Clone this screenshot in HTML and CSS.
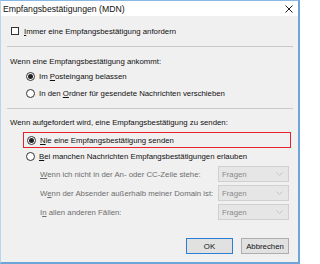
FILE: index.html
```html
<!DOCTYPE html>
<html lang="de">
<head>
<meta charset="utf-8">
<link rel="stylesheet" href="styles.css">
</head>
<body>
<div class="window">
  <div class="titlebar">
    <span class="title">Empfangsbestätigungen (MDN)</span>
    <svg class="close" width="8" height="8" viewBox="0 0 8 8"><path d="M0.5 0.5L7.5 7.5M7.5 0.5L0.5 7.5" stroke="#222" stroke-width="1" fill="none"/></svg>
  </div>
  <div class="content">
    <div class="row check-row">
      <span class="checkbox"></span>
      <span class="label"><u>I</u>mmer eine Empfangsbestätigung anfordern</span>
    </div>
    <div class="sep sep1"></div>
    <div class="row heading h1">Wenn eine Empfangsbestätigung ankommt:</div>
    <div class="row radio-row r1"><span class="radio on"></span><span class="label">Im <u>P</u>osteingang belassen</span></div>
    <div class="row radio-row r2"><span class="radio"></span><span class="label">In den <u>O</u>rdner für gesendete Nachrichten verschieben</span></div>
    <div class="sep sep2"></div>
    <div class="row heading h2">Wenn aufgefordert wird, eine Empfangsbestätigung zu senden:</div>
    <div class="focusbox">
      <span class="radio on"></span><span class="label"><u>N</u>ie eine Empfangsbestätigung senden</span>
    </div>
    <div class="row radio-row r4"><span class="radio"></span><span class="label"><u>B</u>ei manchen Nachrichten Empfangsbestätigungen erlauben</span></div>
    <div class="options">
      <span class="opt-label"><u>W</u>enn ich nicht in der An- oder CC-Zeile stehe:</span>
      <span class="select">Fragen<svg class="chev" width="7" height="4" viewBox="0 0 7 4"><path d="M0.5 0.5L3.5 3.5L6.5 0.5" stroke="#c4c4c4" fill="none"/></svg></span>
      <span class="opt-label">W<u>e</u>nn der Absender außerhalb meiner Domain ist:</span>
      <span class="select">Fragen<svg class="chev" width="7" height="4" viewBox="0 0 7 4"><path d="M0.5 0.5L3.5 3.5L6.5 0.5" stroke="#c4c4c4" fill="none"/></svg></span>
      <span class="opt-label">I<u>n</u> allen anderen Fällen:</span>
      <span class="select">Fragen<svg class="chev" width="7" height="4" viewBox="0 0 7 4"><path d="M0.5 0.5L3.5 3.5L6.5 0.5" stroke="#c4c4c4" fill="none"/></svg></span>
    </div>
    <div class="buttons">
      <span class="btn default">OK</span>
      <span class="btn">Abbrechen</span>
    </div>
  </div>
</div>
</body>
</html>
```

FILE: styles.css
```css
* { box-sizing: border-box; }
html, body { margin: 0; padding: 0; }
body {
  width: 300px;
  height: 264px;
  overflow: hidden;
  font-family: "Liberation Sans", "DejaVu Sans", sans-serif;
  font-size: 7.8px;
  color: #111;
}
.window {
  width: 300px;
  height: 264px;
  background: #f0f0f0;
  border-top: 1px solid #8ab8e2;
  border-left: 1px solid #b9d5ee;
  border-right: 2px solid #6ea5d8;
  border-bottom: 2px solid #6ea5d8;
  display: flex;
  flex-direction: column;
}
.titlebar {
  height: 15px;
  background: #ffffff;
  display: flex;
  align-items: center;
  justify-content: space-between;
  padding: 0 4px 0 2px;
  flex: none;
}
.title { font-size: 8.7px; color: #111; }
.close { margin-right: 1px; }
.content {
  display: flex;
  flex-direction: column;
}
.row {
  height: 14px;
  display: flex;
  align-items: center;
  white-space: nowrap;
}
.check-row { margin-top: 8px; padding-left: 10px; }
.checkbox {
  width: 8px; height: 8px;
  border: 1px solid #333;
  background: #fff;
  margin-right: 5px;
  flex: none;
}
.sep {
  height: 1px;
  background: #c9c9c9;
  margin-left: 6px;
  margin-right: 5px;
}
.sep1 { margin-top: 8px; }
.sep2 { margin-top: 8px; }
.heading { padding-left: 9px; }
.h1 { margin-top: 7px; }
.h2 { margin-top: 6px; }
.radio-row { padding-left: 25px; }
.r1 { margin-top: 1px; }
.r2 { margin-top: 3px; }
.r4 { margin-top: 1px; }
.radio {
  width: 9px; height: 9px;
  border: 1px solid #333;
  border-radius: 50%;
  background: #fff;
  margin-right: 4px;
  flex: none;
  display: flex;
  align-items: center;
  justify-content: center;
}
.radio.on::after {
  content: "";
  width: 5px; height: 5px;
  border-radius: 50%;
  background: #222;
}
.focusbox {
  margin-top: 3px;
  margin-left: 22px;
  width: 268px;
  height: 16px;
  border: 1.5px solid #e8202a;
  display: flex;
  align-items: center;
  padding-left: 3px;
  white-space: nowrap;
}
.options {
  margin-top: 3px;
  display: grid;
  grid-template-columns: 178px 71px;
  grid-auto-rows: 16px;
  row-gap: 3px;
  padding-left: 39px;
  color: #6d6d6d;
  align-items: center;
}
.opt-label { white-space: nowrap; }
.select {
  height: 16px;
  background: #e6e6e6;
  border: 1px solid #d0d0d0;
  display: flex;
  align-items: center;
  justify-content: space-between;
  padding: 0 5px 0 3px;
  color: #8a8a8a;
}
.buttons {
  margin-top: 18px;
  display: flex;
  justify-content: flex-end;
  gap: 8px;
  padding-right: 9px;
}
.btn {
  width: 48px;
  height: 16px;
  background: #e1e1e1;
  border: 1px solid #adadad;
  display: flex;
  align-items: center;
  justify-content: center;
  color: #111;
}
.btn.default { width: 47px; border-color: #2a7fd4; }
```
